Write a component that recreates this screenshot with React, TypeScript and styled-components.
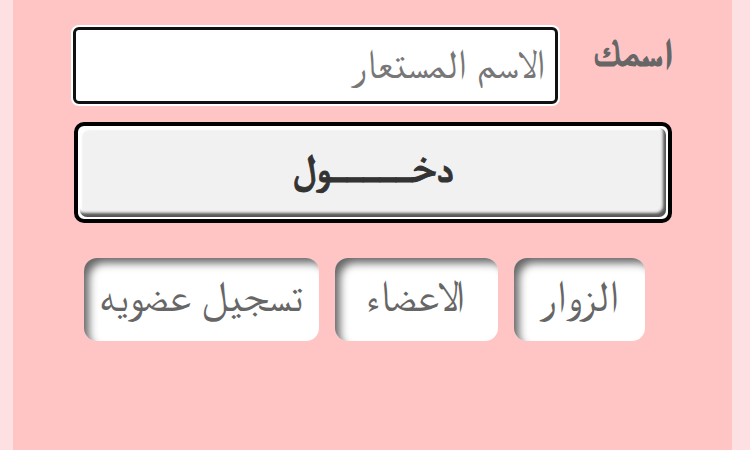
import React from "react";
import styled, { createGlobalStyle } from "styled-components";

const Global = createGlobalStyle`
  html, body { margin: 0; padding: 0; }
  body {
    background: #fde0e2;
    font-family: "FreeSerif", "Noto Naskh Arabic", "DejaVu Sans", serif;
    width: 750px;
    height: 450px;
    overflow: hidden;
  }
`;

const Panel = styled.div`
  box-sizing: border-box;
  margin: 0 18px 0 13px;
  height: 450px;
  background: #ffc5c5;
  padding: 27px 60px 0 61px;
  direction: rtl;
  display: flex;
  flex-direction: column;
`;

const NameRow = styled.div`
  display: flex;
  align-items: center;
  gap: 40px;
  height: 77px;
`;

const Label = styled.label`
  width: 74px;
  font-size: 38px;
  font-weight: bold;
  color: #666;
  -webkit-text-stroke: 1.2px #666;
  margin-top: -22px;
  line-height: 1;
  text-align: right;
`;

const Input = styled.input`
  box-sizing: border-box;
  width: 485px;
  height: 77px;
  border: 3px solid #111;
  border-radius: 6px;
  box-shadow: 0 0 0 2px #fff;
  background: #fff;
  padding: 0 10px;
  font-family: inherit;
  font-size: 41px;
  direction: rtl;
  outline: none;
  &::placeholder { color: #777; }
`;

const LoginFrame = styled.div`
  box-sizing: border-box;
  margin-top: 18px;
  height: 101px;
  border: 4px solid #000;
  border-radius: 10px;
  background: #fff;
  padding: 2px;
  display: flex;
`;

const LoginButton = styled.button`
  flex: 1;
  border: none;
  border-radius: 7px;
  background: #f1f1f1;
  box-shadow: inset -3px -4px 3px #555, inset 2px 2px 2px #fff;
  font-family: inherit;
  font-size: 40px;
  font-weight: bold;
  color: #333;
  -webkit-text-stroke: 0.9px #333;
  padding: 0 0 6px;
  cursor: pointer;
`;

const Choices = styled.div`
  margin-top: 35px;
  display: flex;
  justify-content: center;
  gap: 16px;
  padding-right: 18px;
`;

const Choice = styled.button<{ $w: number }>`
  box-sizing: border-box;
  width: ${(p) => p.$w}px;
  height: 83px;
  border: none;
  border-radius: 13px;
  background: #fff;
  box-shadow: inset 7px 7px 9px -2px #666;
  font-family: inherit;
  font-size: 44px;
  color: #666;
  padding: 0 0 4px;
  cursor: pointer;
`;

export default function App() {
  return (
    <>
      <Global />
      <Panel>
        <NameRow>
          <Label>اسمك</Label>
          <Input placeholder="الاسم المستعار" />
        </NameRow>
        <LoginFrame>
          <LoginButton>دخـــــول</LoginButton>
        </LoginFrame>
        <Choices>
          <Choice $w={131}>الزوار</Choice>
          <Choice $w={163}>الاعضاء</Choice>
          <Choice $w={235}>تسجيل عضويه</Choice>
        </Choices>
      </Panel>
    </>
  );
}
